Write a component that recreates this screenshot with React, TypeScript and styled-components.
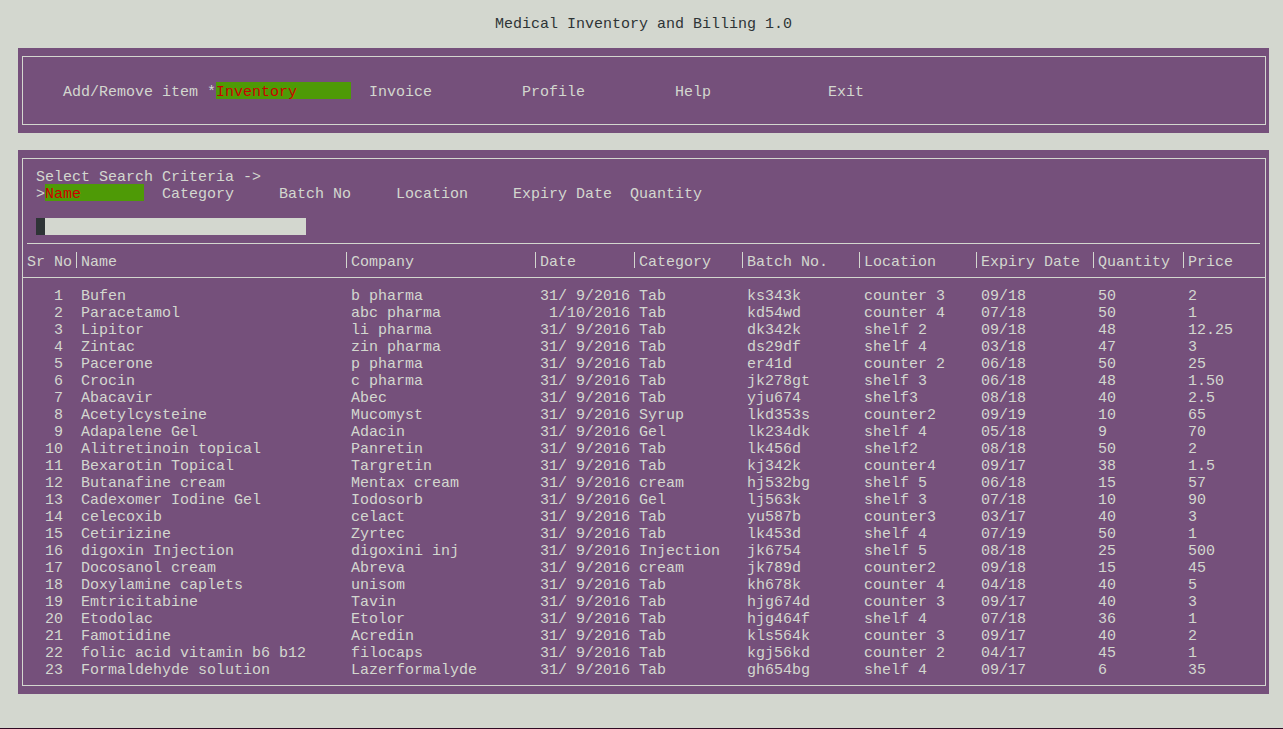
import React from "react";
import styled, { createGlobalStyle } from "styled-components";

const COL = 9;
const ROW = 17;
const FG = "#d3d7cf";
const PURPLE = "#75507b";
const GREEN = "#4e9a06";
const RED = "#cc0000";
const DARK = "#2e3436";

const GlobalStyle = createGlobalStyle`
  html, body {
    margin: 0;
    padding: 0;
    background: ${FG};
  }
  body {
    font-family: "Liberation Mono", "DejaVu Sans Mono", monospace;
    font-size: 15px;
  }
`;

const Screen = styled.div`
  box-sizing: border-box;
  height: 729px;
  padding-top: 14px;
  border-bottom: 1px solid #300a24;
  overflow: hidden;
`;

const Row = styled.div<{ $indent?: number }>`
  display: flex;
  align-items: flex-start;
  height: ${ROW}px;
  line-height: 21px;
  white-space: pre;
  padding-left: ${(p) => (p.$indent ?? 0) * COL}px;
`;

const TitleRow = styled(Row)`
  color: ${DARK};
`;

const Gap = styled.div<{ $rows: number }>`
  height: ${(p) => p.$rows * ROW}px;
`;

const Panel = styled.section`
  box-sizing: border-box;
  margin-left: 18px;
  width: 1251px;
  background: ${PURPLE};
  color: ${FG};
  padding: 8px 3px 8px 4px;
`;

const Frame = styled.div`
  border: 1px solid ${FG};
  padding: 8px 5px 8px 4px;
`;

const Cell = styled.span<{ $w: number; $right?: boolean }>`
  display: inline-block;
  flex: none;
  width: ${(p) => p.$w * COL}px;
  height: ${ROW}px;
  white-space: pre;
  text-align: ${(p) => (p.$right ? "right" : "left")};
`;

const Highlight = styled(Cell)`
  background: ${GREEN};
  color: ${RED};
`;

const Slot = styled.span<{ $w: number }>`
  display: inline-flex;
  flex: none;
  width: ${(p) => p.$w * COL}px;
`;

const InputBar = styled.div`
  display: flex;
  width: ${30 * COL}px;
  height: ${ROW}px;
  background: ${FG};
`;

const Cursor = styled.span`
  width: ${COL}px;
  background: ${DARK};
`;

const Rule = styled.div<{ $full?: boolean }>`
  height: ${ROW}px;
  display: flex;
  align-items: center;
  margin: ${(p) => (p.$full ? "0 -5px 0 -4px" : "0")};
  &::after {
    content: "";
    flex: 1;
    height: 1px;
    background: ${FG};
  }
`;

const Sep = styled.span`
  flex: none;
  width: ${COL}px;
  height: ${ROW}px;
  display: flex;
  padding-left: 4px;
  box-sizing: border-box;
  &::after {
    content: "";
    width: 1px;
    height: 16px;
    background: ${FG};
  }
`;

const menu = ["Add/Remove item", "Inventory", "Invoice", "Profile", "Help", "Exit"];
const criteria = ["Name", "Category", "Batch No", "Location", "Expiry Date", "Quantity"];

const headers: [string, number][] = [
  ["Sr No", 5],
  ["Name", 29],
  ["Company", 20],
  ["Date", 10],
  ["Category", 11],
  ["Batch No.", 12],
  ["Location", 12],
  ["Expiry Date", 12],
  ["Quantity", 9],
  ["Price", 8],
];

const widths = [6, 30, 21, 11, 12, 13, 13, 13, 10, 8];

type Item = [string, string, string, string, string, string, string, string, string];

const items: Item[] = [
  ["Bufen", "b pharma", "31/ 9/2016", "Tab", "ks343k", "counter 3", "09/18", "50", "2"],
  ["Paracetamol", "abc pharma", " 1/10/2016", "Tab", "kd54wd", "counter 4", "07/18", "50", "1"],
  ["Lipitor", "li pharma", "31/ 9/2016", "Tab", "dk342k", "shelf 2", "09/18", "48", "12.25"],
  ["Zintac", "zin pharma", "31/ 9/2016", "Tab", "ds29df", "shelf 4", "03/18", "47", "3"],
  ["Pacerone", "p pharma", "31/ 9/2016", "Tab", "er41d", "counter 2", "06/18", "50", "25"],
  ["Crocin", "c pharma", "31/ 9/2016", "Tab", "jk278gt", "shelf 3", "06/18", "48", "1.50"],
  ["Abacavir", "Abec", "31/ 9/2016", "Tab", "yju674", "shelf3", "08/18", "40", "2.5"],
  ["Acetylcysteine", "Mucomyst", "31/ 9/2016", "Syrup", "lkd353s", "counter2", "09/19", "10", "65"],
  ["Adapalene Gel", "Adacin", "31/ 9/2016", "Gel", "lk234dk", "shelf 4", "05/18", "9", "70"],
  ["Alitretinoin topical", "Panretin", "31/ 9/2016", "Tab", "lk456d", "shelf2", "08/18", "50", "2"],
  ["Bexarotin Topical", "Targretin", "31/ 9/2016", "Tab", "kj342k", "counter4", "09/17", "38", "1.5"],
  ["Butanafine cream", "Mentax cream", "31/ 9/2016", "cream", "hj532bg", "shelf 5", "06/18", "15", "57"],
  ["Cadexomer Iodine Gel", "Iodosorb", "31/ 9/2016", "Gel", "lj563k", "shelf 3", "07/18", "10", "90"],
  ["celecoxib", "celact", "31/ 9/2016", "Tab", "yu587b", "counter3", "03/17", "40", "3"],
  ["Cetirizine", "Zyrtec", "31/ 9/2016", "Tab", "lk453d", "shelf 4", "07/19", "50", "1"],
  ["digoxin Injection", "digoxini inj", "31/ 9/2016", "Injection", "jk6754", "shelf 5", "08/18", "25", "500"],
  ["Docosanol cream", "Abreva", "31/ 9/2016", "cream", "jk789d", "counter2", "09/18", "15", "45"],
  ["Doxylamine caplets", "unisom", "31/ 9/2016", "Tab", "kh678k", "counter 4", "04/18", "40", "5"],
  ["Emtricitabine", "Tavin", "31/ 9/2016", "Tab", "hjg674d", "counter 3", "09/17", "40", "3"],
  ["Etodolac", "Etolor", "31/ 9/2016", "Tab", "hjg464f", "shelf 4", "07/18", "36", "1"],
  ["Famotidine", "Acredin", "31/ 9/2016", "Tab", "kls564k", "counter 3", "09/17", "40", "2"],
  ["folic acid vitamin b6 b12", "filocaps", "31/ 9/2016", "Tab", "kgj56kd", "counter 2", "04/17", "45", "1"],
  ["Formaldehyde solution", "Lazerformalyde", "31/ 9/2016", "Tab", "gh654bg", "shelf 4", "09/17", "6", "35"],
];

function MenuRow() {
  return (
    <Row $indent={3}>
      {menu.map((m, i) => (
        <Slot key={m} $w={17}>
          <Cell $w={1}>{i === 1 ? "*" : " "}</Cell>
          {i === 1 ? <Highlight $w={15}>{m}</Highlight> : <Cell $w={16}>{m}</Cell>}
        </Slot>
      ))}
    </Row>
  );
}

function CriteriaRow() {
  return (
    <Row $indent={1}>
      {criteria.map((c, i) => (
        <Slot key={c} $w={13}>
          <Cell $w={1}>{i === 0 ? ">" : " "}</Cell>
          {i === 0 ? <Highlight $w={11}>{c}</Highlight> : <Cell $w={12}>{c}</Cell>}
        </Slot>
      ))}
    </Row>
  );
}

function HeaderRow() {
  return (
    <Row>
      {headers.map(([h, w], i) => (
        <React.Fragment key={h}>
          {i > 0 && <Sep />}
          <Cell $w={w}>{h}</Cell>
        </React.Fragment>
      ))}
    </Row>
  );
}

export default function App() {
  return (
    <>
      <GlobalStyle />
      <Screen>
        <TitleRow $indent={55}>Medical Inventory and Billing 1.0</TitleRow>
        <Gap $rows={1} />
        <Panel>
          <Frame>
            <Gap $rows={1} />
            <MenuRow />
            <Gap $rows={1} />
          </Frame>
        </Panel>
        <Gap $rows={1} />
        <Panel>
          <Frame>
            <Row $indent={1}>Select Search Criteria -&gt;</Row>
            <CriteriaRow />
            <Gap $rows={1} />
            <Row $indent={1}>
              <InputBar>
                <Cursor />
              </InputBar>
            </Row>
            <Rule />
            <HeaderRow />
            <Rule $full />
            {items.map((it, idx) => {
              const cells = [String(idx + 1).padStart(4, " "), ...it];
              return (
                <Row key={idx}>
                  {cells.map((c, j) => (
                    <Cell key={j} $w={widths[j]}>
                      {c}
                    </Cell>
                  ))}
                </Row>
              );
            })}
          </Frame>
        </Panel>
      </Screen>
    </>
  );
}
